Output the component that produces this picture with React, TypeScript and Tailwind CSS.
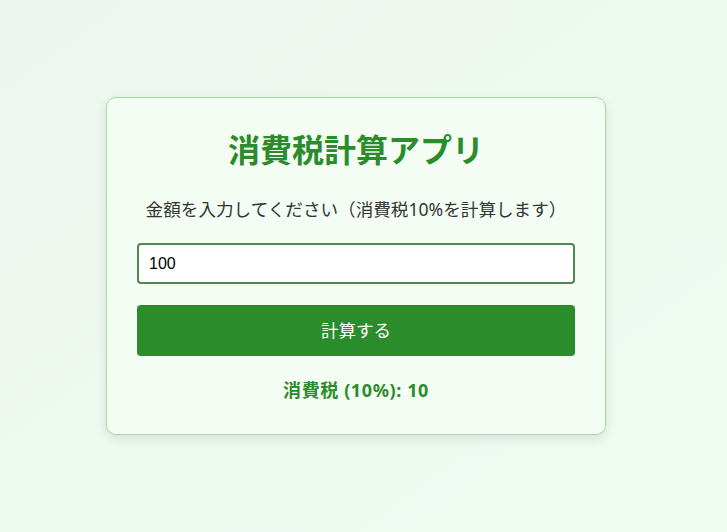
import React, { useState } from 'react'

export default function App() {
  const [amount, setAmount] = useState('100')
  const [tax, setTax] = useState<number | null>(10)

  const handleCalc = () => {
    const value = parseFloat(amount)
    if (isNaN(value)) {
      setTax(null)
      return
    }
    setTax(Math.floor(value * 0.1))
  }

  return (
    <div className="flex min-h-screen items-center justify-center bg-gradient-to-br from-[#edf6ee] to-[#effcf2] pr-[15px] font-['Noto_Sans','Noto_Sans_CJK_JP',sans-serif]">
      <div className="w-[500px] rounded-[10px] border border-[#a9d8a9] bg-[#f3fdf3] px-[30px] pt-[30px] pb-[32px] text-center shadow-[0_4px_12px_rgba(0,0,0,0.1)]">
        <h1 className="text-[32px] leading-[44px] font-bold text-[#2b8c2b]">消費税計算アプリ</h1>
        <p className="mt-[25px] text-[17.6px] leading-[24px] text-[#333]">
          金額を入力してください（消費税10%を計算します）
        </p>
        <input
          type="text"
          value={amount}
          onChange={(e) => setAmount(e.target.value)}
          className="mt-[22px] block h-[41px] w-full rounded-[4px] border-2 border-[#4f874f] bg-white px-[10px] text-left font-['Liberation_Sans',Arial,sans-serif] text-[16px] text-black outline-none"
        />
        <button
          onClick={handleCalc}
          className="mt-[21px] block h-[51px] w-full rounded-[4px] bg-[#2b8c2b] text-[17.5px] text-white"
        >
          計算する
        </button>
        <div className="mt-[22px] text-[18px] leading-[24px] font-bold tracking-[0.6px] text-[#2b8c2b]">
          {tax !== null ? `消費税 (10%): ${tax}` : '数値を入力してください'}
        </div>
      </div>
    </div>
  )
}
